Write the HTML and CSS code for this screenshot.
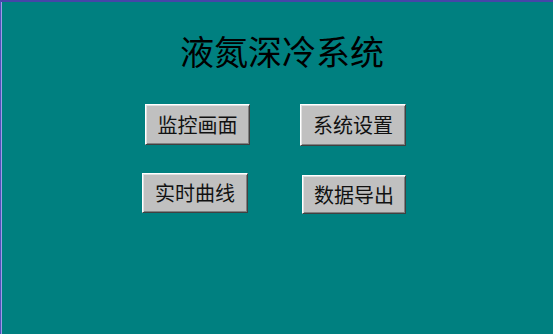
FILE: index.html
```html
<!DOCTYPE html>
<html lang="zh-CN">
<head>
<meta charset="utf-8">
<title>液氮深冷系统</title>
<link rel="stylesheet" href="styles.css">
</head>
<body>
<div class="screen">
  <h1 class="title">液氮深冷系统</h1>
  <div class="menu">
    <button class="btn btn-monitor">监控画面</button>
    <button class="btn btn-settings">系统设置</button>
    <button class="btn btn-curve">实时曲线</button>
    <button class="btn btn-export">数据导出</button>
  </div>
</div>
</body>
</html>
```
FILE: styles.css
```css
html, body {
  margin: 0;
  padding: 0;
  background: #008080;
}

.screen {
  width: 553px;
  height: 334px;
  box-sizing: border-box;
  background: #008080;
  border-top: 2px solid #4646a8;
  border-left: 1px solid #5050b8;
  box-shadow: inset 1px 0 0 #9c9ce8;
  font-family: "Noto Sans CJK SC", "Noto Sans", sans-serif;
  overflow: hidden;
}

.title {
  margin: 0;
  padding: 29px 0 0 10px;
  font-size: 34px;
  line-height: 40px;
  font-weight: normal;
  color: #000;
  text-align: center;
}

.menu {
  display: grid;
  grid-template-columns: 110px 110px;
  column-gap: 45px;
  row-gap: 27px;
  margin-top: 33px;
  padding-left: 141px;
  align-items: start;
  justify-items: start;
}

.btn {
  width: 105px;
  height: 41px;
  padding: 0;
  box-sizing: border-box;
  background: #c0c0c0;
  border-style: solid;
  border-width: 1px;
  border-color: #ffffff #404040 #404040 #ffffff;
  box-shadow: inset 1px 1px 0 #e0e0e0, inset -1px -1px 0 #808080;
  font-family: "Noto Sans CJK SC", "Noto Sans", sans-serif;
  font-size: 20px;
  line-height: 1;
  color: #111;
  cursor: pointer;
}

.btn-monitor { margin-left: 3px; }
.btn-settings { margin-left: 3px; width: 106px; height: 42px; }
.btn-curve { margin-left: 0; width: 106px; height: 40px; }
.btn-export { margin-left: 5px; margin-top: 2px; width: 104px; height: 39px; }
```
